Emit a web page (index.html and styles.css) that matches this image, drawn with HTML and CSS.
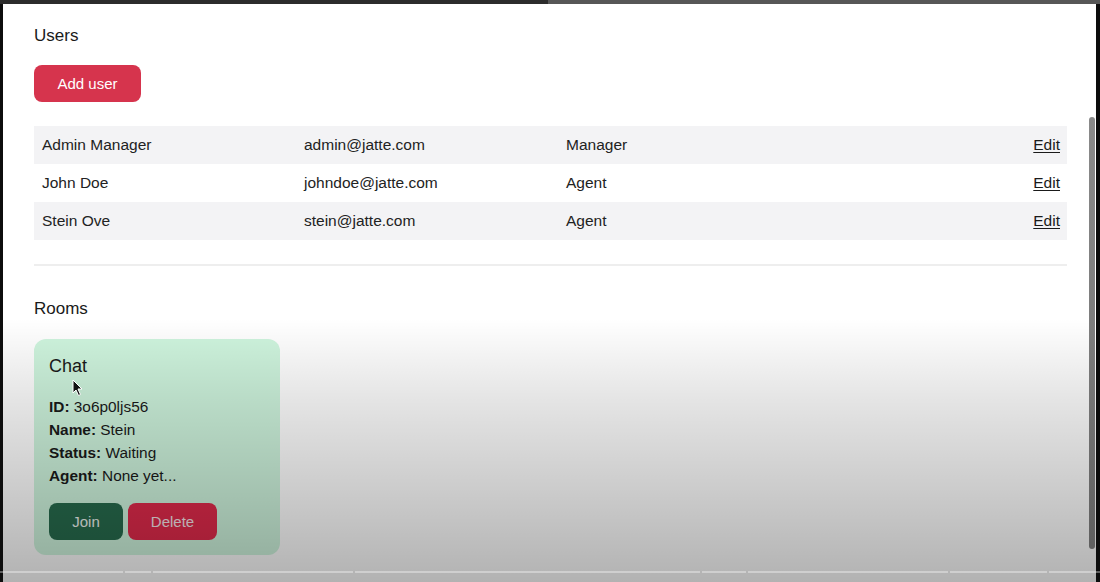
FILE: index.html
```html
<!DOCTYPE html>
<html lang="en">
<head>
<meta charset="utf-8">
<title>Admin</title>
<link rel="stylesheet" href="styles.css">
</head>
<body>
<div class="frame">
  <main class="page">
    <h2 class="title">Users</h2>
    <button class="btn btn-red btn-add">Add user</button>
    <div class="users">
      <div class="row alt"><span>Admin Manager</span><span>admin@jatte.com</span><span>Manager</span><a class="edit" href="#">Edit</a></div>
      <div class="row"><span>John Doe</span><span>johndoe@jatte.com</span><span>Agent</span><a class="edit" href="#">Edit</a></div>
      <div class="row alt"><span>Stein Ove</span><span>stein@jatte.com</span><span>Agent</span><a class="edit" href="#">Edit</a></div>
    </div>
    <hr class="sep">
    <h2 class="title rooms-title">Rooms</h2>
    <div class="rooms">
      <div class="card">
        <h3 class="card-title">Chat</h3>
        <div class="info">
          <p><b>ID:</b> 3o6p0ljs56</p>
          <p><b>Name:</b> Stein</p>
          <p><b>Status:</b> Waiting</p>
          <p><b>Agent:</b> None yet...</p>
        </div>
        <div class="actions">
          <button class="btn btn-green">Join</button>
          <button class="btn btn-del">Delete</button>
        </div>
      </div>
    </div>
  </main>
  <div class="shade"></div>
  <div class="topbar"><div class="played"></div></div>
  <div class="edge-left"></div>
  <div class="edge-right"></div>
  <div class="scrollthumb"></div>
  <div class="chapters">
    <i style="width:123px"></i><i style="width:26px"></i><i style="width:200px"></i><i style="width:345px"></i><i style="width:44px"></i><i style="width:200px"></i><i style="width:97px"></i><i style="width:51px"></i>
  </div>
  <svg class="cursor" width="12" height="18" viewBox="0 0 12 18"><path d="M1 1 L1 14 L4 11 L6.5 16.5 L8.5 15.5 L6 10 L10 10 Z" fill="#111" stroke="#fff" stroke-width="1"/></svg>
</div>
</body>
</html>
```

FILE: styles.css
```css
* { box-sizing: border-box; }
html, body { margin: 0; padding: 0; background: #fff; }
body {
  font-family: "Liberation Sans", Arial, sans-serif;
  color: #1c1c1c;
  width: 1100px;
  height: 582px;
  overflow: hidden;
}
.frame { position: relative; width: 1100px; height: 582px; overflow: hidden; background: #fff; }
.page { padding: 26px 33px 0 34px; }
.title { margin: 0; font-size: 17px; font-weight: 400; line-height: 20px; color: #1a1a1a; }
.btn {
  font-family: inherit;
  border: none;
  border-radius: 8px;
  height: 37px;
  font-size: 15px;
  cursor: pointer;
}
.btn-red { background: #d6344d; color: #fff; }
.btn-add { margin-top: 19px; padding: 0 23px; width: 107px; display: block; }
.users { margin-top: 24px; }
.row {
  display: grid;
  grid-template-columns: 262px 262px 1fr auto;
  align-items: center;
  height: 38px;
  padding: 0 7px 0 8px;
  font-size: 15.5px;
  color: #222;
}
.row.alt { background: #f3f3f5; }
.edit { color: #1a1a1a; text-decoration: underline; text-underline-offset: 2px; }
.sep { margin: 24px 0 0; border: none; border-top: 2px solid #eeeeee; }
.rooms-title { margin-top: 33px; }
.rooms { margin-top: 20px; display: flex; }
.card {
  width: 246px;
  background: #cff5de;
  border-radius: 12px;
  padding: 16px 15px 15px;
}
.card-title { margin: 0; font-size: 18px; font-weight: 400; line-height: 22px; color: #1a1a1a; }
.info { margin-top: 18px; font-size: 15.4px; line-height: 23px; color: #1a1a1a; }
.info p { margin: 0; }
.info b { font-weight: 700; }
.actions { margin-top: 16px; display: flex; gap: 5px; }
.btn-green { background: #276b4d; color: #eef3f0; padding: 0 23px; width: 74px; }
.btn-del { background: #e02a4b; color: #f4e6e9; padding: 0 22px; width: 89px; }

.shade {
  position: absolute; left: 0; right: 0; top: 318px; bottom: 0;
  background: linear-gradient(to bottom, rgba(0,0,0,0) 0%, rgba(0,0,0,0.1) 30%, rgba(0,0,0,0.3) 100%);
  pointer-events: none;
}
.topbar { position: absolute; left: 0; top: 0; width: 1100px; height: 4px; background: #575757; }
.played { width: 548px; height: 4px; background: #2c2c2c; }
.edge-left { position: absolute; left: 0; top: 4px; bottom: 0; width: 3px; background: #0d0d0d; }
.edge-right { position: absolute; right: 0; top: 4px; bottom: 0; width: 4px; background: #0d0d0d; }
.scrollthumb {
  position: absolute; left: 1089px; top: 117px; width: 6px; height: 432px;
  border-radius: 3px;
  background: linear-gradient(to bottom, #8a8a8a 0%, #7d7d7d 50%, #5f5f5f 100%);
}
.chapters { position: absolute; left: 0; top: 571px; display: flex; gap: 2px; height: 2px; }
.chapters i { display: block; height: 2px; background: rgba(255,255,255,0.35); }
.cursor { position: absolute; left: 72px; top: 379px; }
```
